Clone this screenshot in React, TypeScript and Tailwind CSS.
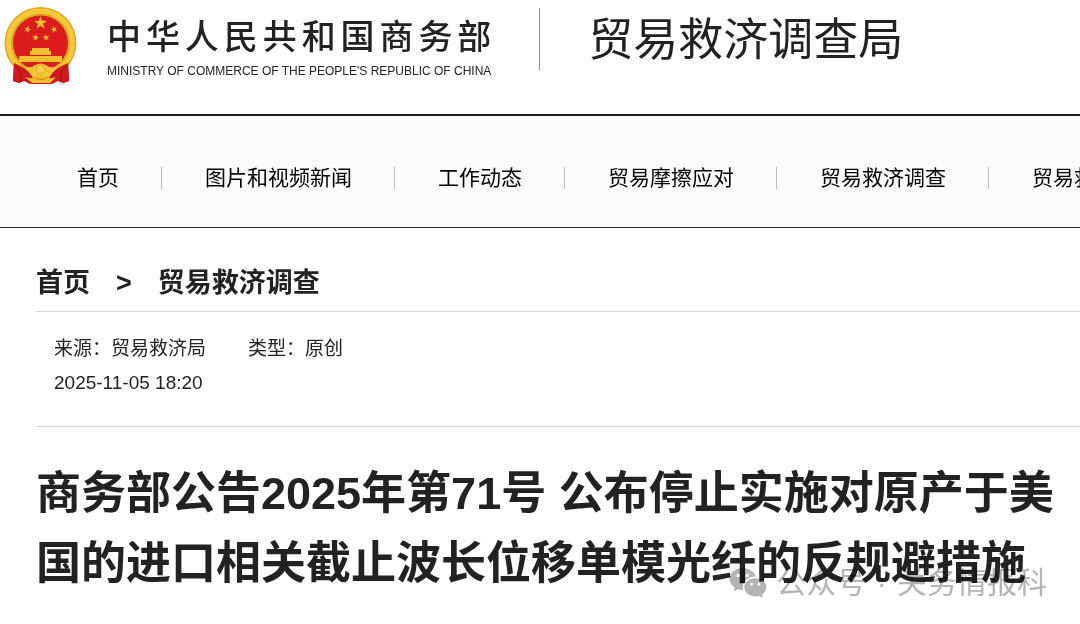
import React from 'react';
import { RiWechatFill } from 'react-icons/ri';

const navItems = [
  '首页',
  '图片和视频新闻',
  '工作动态',
  '贸易摩擦应对',
  '贸易救济调查',
  '贸易救济规则',
];

const STAR = 'M0 -10 L2.4 -3.2 L9.5 -3.1 L3.8 1.2 L5.9 8.1 L0 4 L-5.9 8.1 L-3.8 1.2 L-9.5 -3.1 L-2.4 -3.2 Z';

function Emblem() {
  return (
    <svg viewBox="0 0 74 79" className="h-[79px] w-[74px] shrink-0" role="img" aria-label="国徽">
      <path d="M10 54 L9 74 L15 76 L22 73 L27 77 L47 77 L52 73 L59 76 L65 74 L64 54 Z" fill="#cf1a1c" />
      <circle cx="36.500" cy="36" r="36" fill="#dfa622" />
      <circle cx="36.500" cy="36" r="32" fill="none" stroke="#f3c93a" strokeWidth="5" />
      <circle cx="36.500" cy="36" r="27.5" fill="#dd1c1f" />
      <path d="M10 56 Q18 59 24 64 L30 72 L26 77 L20 74 L15 76 L9 74 Z" fill="#cf1a1c" />
      <path d="M64 56 Q56 59 50 64 L44 72 L48 77 L54 74 L59 76 L65 74 Z" fill="#cf1a1c" />
      <path d="M12 60 Q18 63 17 74 M62 60 Q56 63 57 74" fill="none" stroke="#a50f14" strokeWidth="1" />
      <g fill="#f0c030">
        <path d={STAR} transform="translate(36.500 16) scale(.68)" />
        <path d={STAR} transform="translate(23.500 22.500) rotate(20) scale(.36)" />
        <path d={STAR} transform="translate(50 22.500) rotate(-20) scale(.36)" />
        <path d={STAR} transform="translate(31.500 30.500) rotate(10) scale(.36)" />
        <path d={STAR} transform="translate(42 30.500) rotate(-10) scale(.36)" />
        <path d="M28 41 H45 V44 H47 V48 H26 V44 H28 Z" />
        <path d="M15 49 H58 V55 H15 Z" />
      </g>
      <path d="M20 59 Q27 62 31 58 Q36.500 55 42 58 Q46 62 54 59 Q50 67 43 66 L37 63 L31 66 Q24 67 20 59 Z" fill="#f3c436" />
      <circle cx="36.500" cy="62.500" r="4.500" fill="#f6d052" stroke="#e2a526" strokeWidth="1" />
      <path d="M21 70 Q29 73 34 68 L40 68 Q45 73 52 70 L46 76 H28 Z" fill="#f0bd2c" />
      <path d="M30 70 Q37 75 44 70" fill="none" stroke="#d7861a" strokeWidth="1" />
    </svg>
  );
}

function SiteHeader() {
  return (
    <header className="flex h-[114px] items-start whitespace-nowrap pl-1 pt-[7px]">
      <Emblem />
      <a href="#" className="ml-[29px] block">
        <span className="block pt-1 text-[34px] font-medium leading-[52px] [text-align-last:justify]">
          中华人民共和国商务部
        </span>
        <span className="block text-[12px] leading-4">
          MINISTRY OF COMMERCE OF THE PEOPLE'S REPUBLIC OF CHINA
        </span>
      </a>
      <div className="ml-12 mt-px h-[62px] w-px shrink-0 bg-[#8c8c8c]" />
      <h2 className="ml-12 pt-0.5 text-[45px] leading-[64px]">贸易救济调查局</h2>
    </header>
  );
}

function MainNav() {
  return (
    <nav className="overflow-hidden border-b border-t-2 border-[#222] bg-[#fbfbfb] px-[77px]">
      <ul className="flex h-[111px] items-center gap-[42px] whitespace-nowrap pt-3 text-[21px] text-black">
        {navItems.map((item, i) => (
          <React.Fragment key={item}>
            {i > 0 && <li aria-hidden="true" className="h-[22px] w-0.5 shrink-0 border-l border-[#bbb]" />}
            <li>
              <a href="#">{item}</a>
            </li>
          </React.Fragment>
        ))}
      </ul>
    </nav>
  );
}

export default function App() {
  return (
    <div className="overflow-hidden bg-white font-['Liberation_Sans','Noto_Sans_CJK_SC',sans-serif] text-[#222]">
      <SiteHeader />
      <MainNav />

      <main className="pl-9">
        <nav className="flex items-center gap-[26px] border-b border-[#d8d8d8] pb-2 pt-[35px] text-[27px] font-bold leading-10">
          <a href="#">首页</a>
          <span>&gt;</span>
          <a href="#">贸易救济调查</a>
        </nav>

        <div className="border-b border-[#d8d8d8] pb-[26px] pl-[18px] pt-5 text-[19px] leading-[34px]">
          <div className="flex gap-[42px]">
            <span>来源：贸易救济局</span>
            <span>类型：原创</span>
          </div>
          <time dateTime="2025-11-05T18:20" className="block">2025-11-05 18:20</time>
        </div>

        <div className="relative">
          <h1 className="pb-7 pt-8 text-[45px] font-bold leading-[70px]">
            商务部公告2025年第71号 公布停止实施对原产于美国的进口相关截止波长位移单模光纤的反规避措施
          </h1>
          <div className="absolute bottom-6 right-[33px] flex items-center gap-2 whitespace-nowrap text-[30px] leading-10 text-[#b4b4b4] mix-blend-multiply">
            <RiWechatFill className="size-10" />
            <span>
              公众号<span className="mx-0.5"> · </span>关务情报科
            </span>
          </div>
        </div>
      </main>
    </div>
  );
}
